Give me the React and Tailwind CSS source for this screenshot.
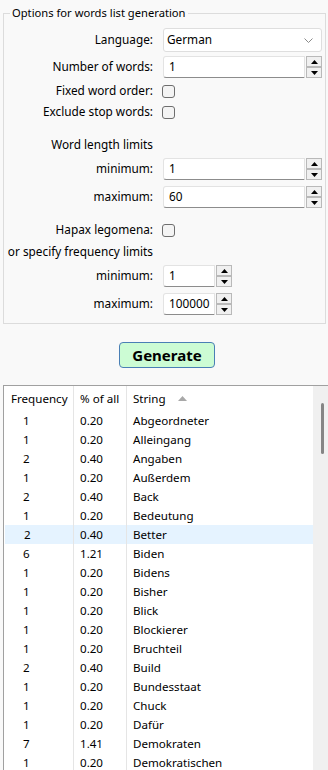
import React from "react";

const rows = [
  ["1", "0.20", "Abgeordneter"],
  ["1", "0.20", "Alleingang"],
  ["2", "0.40", "Angaben"],
  ["1", "0.20", "Außerdem"],
  ["2", "0.40", "Back"],
  ["1", "0.20", "Bedeutung"],
  ["2", "0.40", "Better"],
  ["6", "1.21", "Biden"],
  ["1", "0.20", "Bidens"],
  ["1", "0.20", "Bisher"],
  ["1", "0.20", "Blick"],
  ["1", "0.20", "Blockierer"],
  ["1", "0.20", "Bruchteil"],
  ["2", "0.40", "Build"],
  ["1", "0.20", "Bundesstaat"],
  ["1", "0.20", "Chuck"],
  ["1", "0.20", "Dafür"],
  ["7", "1.41", "Demokraten"],
  ["1", "0.20", "Demokratischen"],
];

const SpinButton = ({ up }) => (
  <div className="flex h-[11px] w-[16px] items-center justify-center border border-[#b9b9b9] bg-[#f0f0f0]">
    <svg width="7" height="4" viewBox="0 0 7 4">
      {up ? (
        <polygon points="0,4 3.5,0 7,4" fill="#000" />
      ) : (
        <polygon points="0,0 3.5,4 7,0" fill="#000" />
      )}
    </svg>
  </div>
);

const SpinBox = ({ value, width }) => (
  <div className="flex h-[22px] items-stretch">
    <div
      className={`${width} flex items-center rounded-l-[3px] border border-[#e3e3e3] border-b-[#8c8c8c] bg-white pl-[5px]`}
    >
      {value}
    </div>
    <div className="ml-[1px] flex flex-col">
      <SpinButton up />
      <SpinButton />
    </div>
  </div>
);

const CheckBox = () => (
  <div className="ml-[-1px] h-[13px] w-[13px] rounded-[3px] border border-[#6e6e6e] bg-[#f4f4f4]" />
);

const Row = ({ label, className, children }) => (
  <div className={`flex items-center ${className}`}>
    <div className="w-[149px] shrink-0 whitespace-nowrap text-right">{label}</div>
    <div className="ml-[10px]">{children}</div>
  </div>
);

export default function App() {
  return (
    <div
      className="h-[770px] w-[328px] overflow-hidden bg-[#f9f9f9] text-[11.8px] text-black"
      style={{ fontFamily: '"Segoe UI", "Noto Sans", sans-serif' }}
    >
      <fieldset className="ml-[3px] mt-[5px] w-[323px] border border-[#dcdcdc] pb-[8px]">
        <legend className="ml-[6px] px-[2px] text-[11.2px] leading-[16px]">
          Options for words list generation
        </legend>

        <Row label="Language:" className="mt-[7px] h-[24px]">
          <div className="flex h-[24px] w-[159px] items-center justify-between rounded-[3px] border border-[#dedede] bg-white pl-[3px] pr-[8px]">
            <span>German</span>
            <svg width="9" height="5" viewBox="0 0 9 5">
              <polyline points="0.5,0.5 4.5,4.5 8.5,0.5" fill="none" stroke="#8a8a8a" strokeWidth="1" />
            </svg>
          </div>
        </Row>

        <Row label="Number of words:" className="mt-[4px] h-[22px]">
          <SpinBox value="1" width="w-[142px]" />
        </Row>

        <Row label="Fixed word order:" className="mt-[3px] h-[20px]">
          <CheckBox />
        </Row>

        <Row label="Exclude stop words:" className="mt-[1px] h-[20px]">
          <CheckBox />
        </Row>

        <Row label="Word length limits" className="mt-[13px] h-[20px]" />

        <Row label="minimum:" className="mt-[3px] h-[22px]">
          <SpinBox value="1" width="w-[142px]" />
        </Row>

        <Row label="maximum:" className="mt-[6px] h-[22px]">
          <SpinBox value="60" width="w-[142px]" />
        </Row>

        <Row label="Hapax legomena:" className="mt-[12px] h-[20px]">
          <CheckBox />
        </Row>

        <Row label="or specify frequency limits" className="mt-[2px] h-[20px]" />

        <Row label="minimum:" className="mt-[3px] h-[22px]">
          <SpinBox value="1" width="w-[52px]" />
        </Row>

        <Row label="maximum:" className="mt-[6px] h-[22px]">
          <SpinBox value="100000" width="w-[52px]" />
        </Row>
      </fieldset>

      <button className="ml-[119px] mt-[18px] flex h-[26px] w-[96px] items-center justify-center rounded-[4px] border border-[#4a7fb5] bg-[#ccfcd4] text-[15px] font-bold">
        Generate
      </button>

      <div className="ml-[3px] mt-[17px] flex h-[400px] w-[325px] border-l border-t border-[#a0a0a0] bg-white text-[11.6px]">
        <div className="flex-1">
          <div className="flex h-[25px] items-center">
            <div className="flex h-full w-[70px] items-center border-r border-[#e5e5e5] pl-[7px]">
              Frequency
            </div>
            <div className="flex h-full w-[53px] items-center border-r border-[#e5e5e5] pl-[6px]">
              % of all
            </div>
            <div className="flex h-full flex-1 items-center pl-[6px]">
              String
              <svg className="ml-[12px]" width="9" height="5" viewBox="0 0 9 5">
                <polygon points="0,5 4.5,0 9,5" fill="#a8a8a8" />
              </svg>
            </div>
          </div>
          {rows.map(([freq, pct, word]) => (
            <div
              key={word}
              className={`flex h-[19px] items-center ${word === "Better" ? "ml-[1px] bg-[#e5f3ff]" : ""}`}
            >
              <div
                className={`flex h-full items-center border-r border-[#e5e5e5] pl-[19px] ${word === "Better" ? "w-[69px]" : "w-[70px]"}`}
              >
                {freq}
              </div>
              <div className="flex h-full w-[53px] items-center border-r border-[#e5e5e5] pl-[6px]">
                {pct}
              </div>
              <div className="flex h-full flex-1 items-center pl-[6px]">{word}</div>
            </div>
          ))}
        </div>
        <div className="w-[15px] bg-[#f0f0f0]">
          <div className="ml-[8px] mt-[17px] h-[51px] w-[3px] rounded-full bg-[#858585]" />
        </div>
      </div>
    </div>
  );
}
